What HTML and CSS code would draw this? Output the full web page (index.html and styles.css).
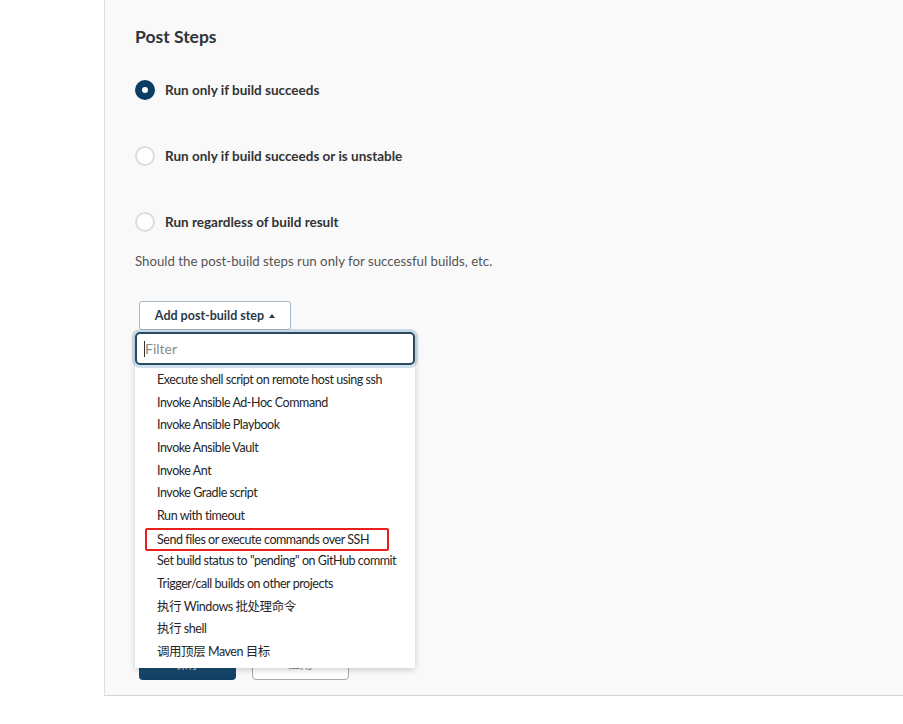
FILE: index.html
```html
<!DOCTYPE html>
<html lang="en">
<head>
<meta charset="utf-8">
<title>Post Steps</title>
<link rel="stylesheet" href="styles.css">
</head>
<body>
<div class="page">
  <section class="panel">
    <h2 class="title">Post Steps</h2>
    <div class="radios">
      <label class="radio-row"><span class="radio checked"></span><span class="radio-label">Run only if build succeeds</span></label>
      <label class="radio-row"><span class="radio"></span><span class="radio-label">Run only if build succeeds or is unstable</span></label>
      <label class="radio-row"><span class="radio"></span><span class="radio-label">Run regardless of build result</span></label>
    </div>
    <p class="help">Should the post-build steps run only for successful builds, etc.</p>
    <div class="add-wrap">
      <button class="add-btn">Add post-build step <span class="caret-up"></span></button>
      <div class="menu">
        <div class="filter"><span class="cursor"></span><span class="placeholder">Filter</span></div>
        <ul class="items">
          <li>Execute shell script on remote host using ssh</li>
          <li>Invoke Ansible Ad-Hoc Command</li>
          <li>Invoke Ansible Playbook</li>
          <li>Invoke Ansible Vault</li>
          <li>Invoke Ant</li>
          <li>Invoke Gradle script</li>
          <li>Run with timeout</li>
          <li><span class="mark">Send files or execute commands over SSH</span></li>
          <li>Set build status to "pending" on GitHub commit</li>
          <li>Trigger/call builds on other projects</li>
          <li>执行 Windows 批处理命令</li>
          <li>执行 shell</li>
          <li>调用顶层 Maven 目标</li>
        </ul>
      </div>
    </div>
    <div class="actions">
      <button class="save">保存</button>
      <button class="apply">应用</button>
    </div>
  </section>
</div>
</body>
</html>
```
FILE: styles.css
```css
* { box-sizing: border-box; }
html, body { margin: 0; padding: 0; background: #ffffff; }
body {
  font-family: Lato, "Noto Sans CJK SC", sans-serif;
  color: #333333;
  width: 903px;
  height: 724px;
  overflow: hidden;
}
.page { padding-left: 104px; }
.panel {
  background: #f9f9fa;
  border-left: 1px solid #dedede;
  border-bottom: 1px solid #d4d4d4;
  height: 696px;
  padding: 27px 0 0 30px;
}
.title {
  margin: 0;
  font-size: 17.5px;
  font-weight: bold;
  line-height: 20px;
  color: #2f3338;
}
.radios {
  margin-top: 33px;
  display: flex;
  flex-direction: column;
  gap: 46px;
}
.radio-row {
  display: flex;
  align-items: center;
  gap: 10px;
  height: 20px;
}
.radio {
  width: 20px;
  height: 20px;
  border-radius: 50%;
  border: 2px solid #dcdcdc;
  background: #ffffff;
  flex: none;
}
.radio.checked {
  border: 7px solid #0b3d63;
  background: #ffffff;
}
.radio-label {
  font-size: 13.5px;
  font-weight: bold;
  color: #333333;
}
.help {
  margin: 19px 0 0 0;
  font-size: 13.25px;
  line-height: 20px;
  color: #555555;
}
.add-wrap {
  position: relative;
  margin-top: 30px;
  padding-left: 4px;
}
.add-btn {
  height: 29px;
  width: 152px;
  border: 1px solid #a8b8c6;
  border-radius: 3px;
  background: #ffffff;
  font-family: inherit;
  font-size: 12.5px;
  font-weight: bold;
  color: #2c3a48;
  padding: 0;
  display: flex;
  align-items: center;
  justify-content: center;
  gap: 5px;
}
.caret-up {
  width: 0;
  height: 0;
  border-left: 3.5px solid transparent;
  border-right: 3.5px solid transparent;
  border-bottom: 4px solid #2c3a48;
}
.menu {
  position: absolute;
  left: 0;
  top: 31px;
  width: 280px;
  background: #ffffff;
  box-shadow: 0 2px 6px rgba(0, 0, 0, 0.18);
  padding-bottom: 4px;
  z-index: 5;
}
.filter {
  height: 33px;
  border: 2px solid #2a4a60;
  border-radius: 5px;
  background: #ffffff;
  box-shadow: 0 0 0 3px rgba(120, 165, 195, 0.35);
  display: flex;
  align-items: center;
  padding-left: 7px;
}
.cursor {
  width: 1px;
  height: 16px;
  background: #333333;
}
.placeholder {
  font-size: 14px;
  color: #8a8a8a;
}
.items {
  list-style: none;
  margin: 0;
  padding: 4px 0 0 22px;
}
.items li {
  height: 22.67px;
  line-height: 22.67px;
  font-size: 12.5px;
  letter-spacing: -0.45px;
  color: #262626;
  white-space: nowrap;
}
.mark {
  display: inline-block;
  margin-left: -12px;
  padding: 0 18px 0 10px;
  height: 23px;
  line-height: 19px;
  border: 2px solid #e8201c;
  border-radius: 2px;
}
.actions {
  margin-top: 316px;
  padding-left: 4px;
  display: flex;
  gap: 16px;
}
.save, .apply {
  width: 97px;
  height: 34px;
  border-radius: 4px;
  font-family: inherit;
  font-size: 12px;
}
.save {
  border: none;
  background: linear-gradient(#2a6189, #0f3f63);
  color: #cfd9e2;
}
.apply {
  background: #ffffff;
  border: 1px solid #a9a9a9;
  color: #888888;
}
```
